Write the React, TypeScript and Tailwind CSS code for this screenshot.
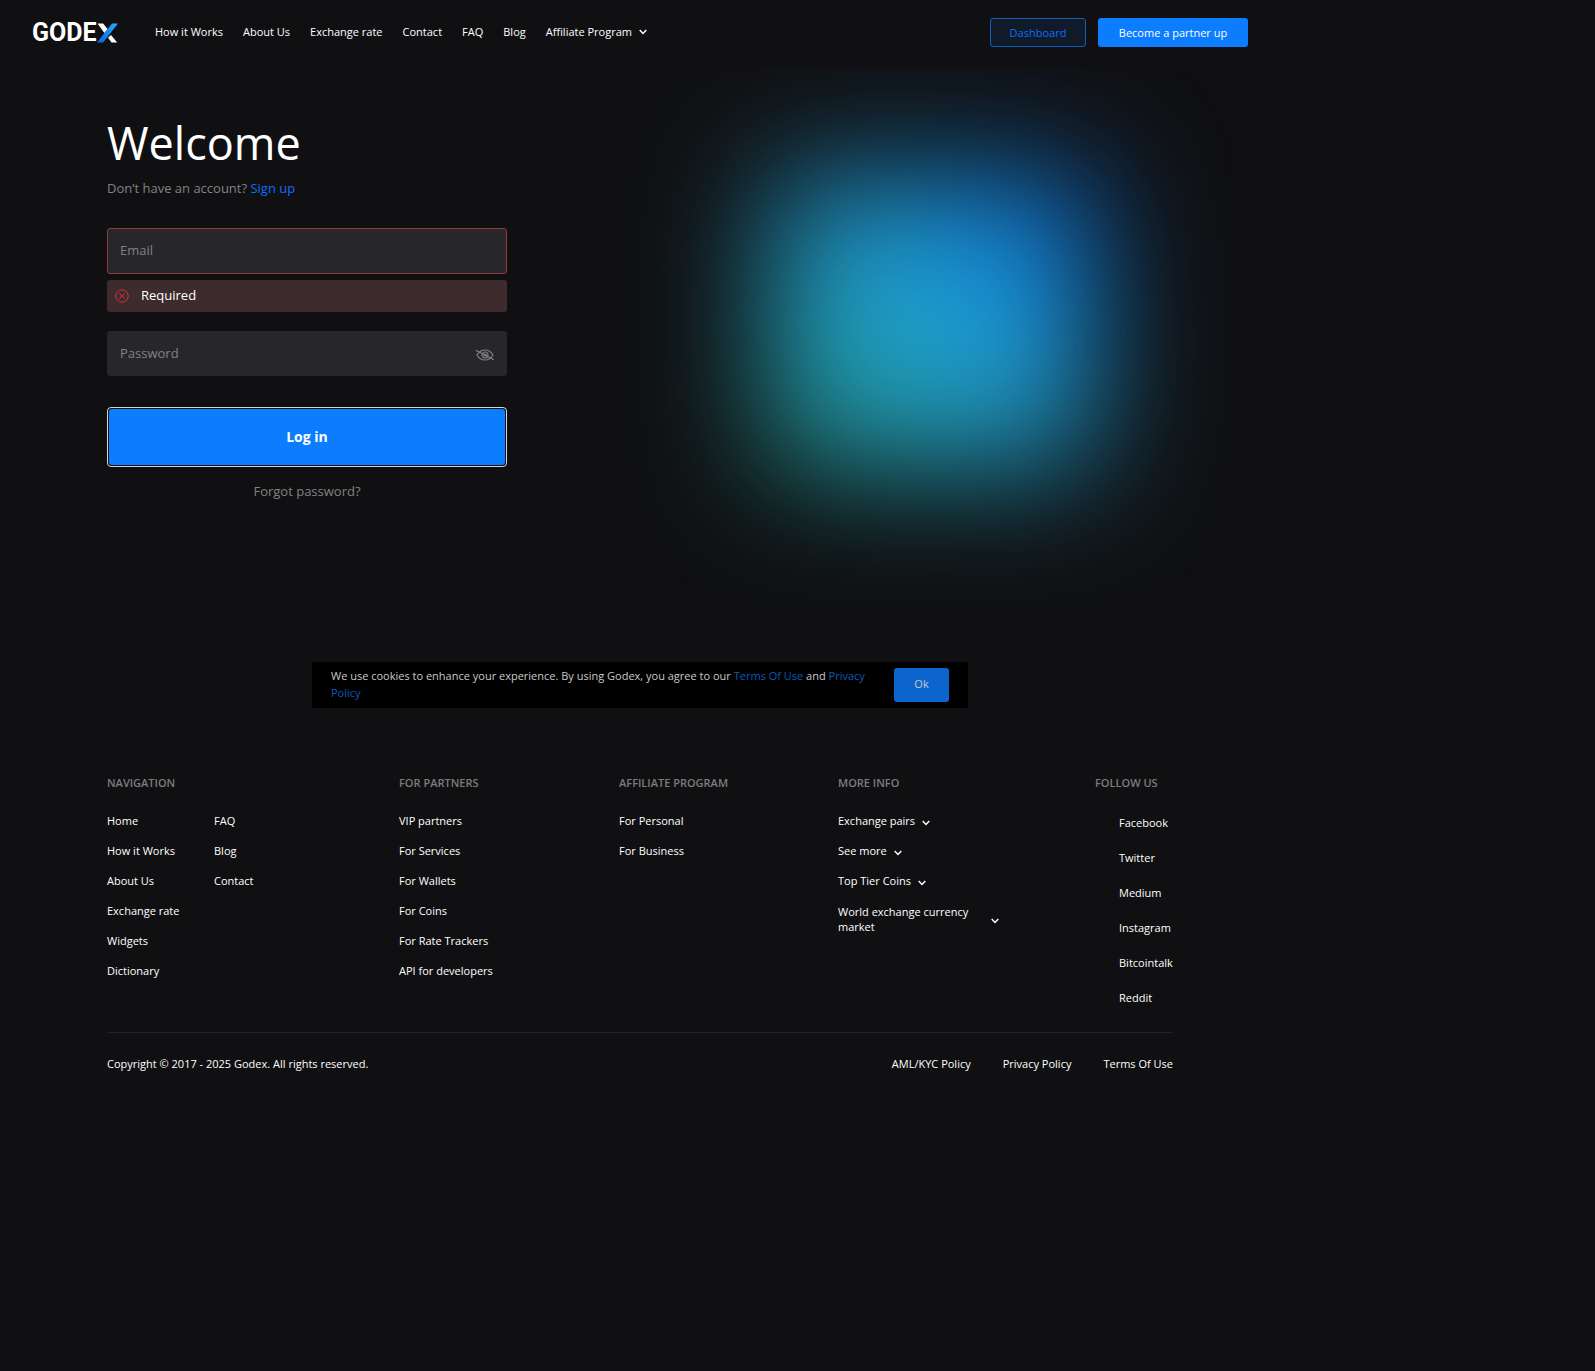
import React from "react";

const navLinks = ["How it Works", "About Us", "Exchange rate", "Contact", "FAQ", "Blog"];

function Chevron({ className = "" }: { className?: string }) {
  return (
    <svg viewBox="0 0 8 6" className={"h-[6px] w-2 shrink-0 " + className} fill="none" stroke="currentColor" strokeWidth="1.5" aria-hidden="true">
      <path d="M0.7 1l3.3 3.4L7.3 1" />
    </svg>
  );
}

function Logo() {
  return (
    <span className="flex items-center">
      <span className="w-[65px] font-['Roboto',sans-serif] text-[25px] leading-5 font-bold">GODE</span>
      <svg viewBox="65 0 21 20" className="h-5 w-[21px]" aria-hidden="true">
        <defs>
          <linearGradient id="slash" x1="0" y1="1" x2="1" y2="0">
            <stop offset="0" stopColor="#0d5fee" />
            <stop offset="1" stopColor="#1fb0f5" />
          </linearGradient>
        </defs>
        <path d="M65.5 .5h5.600L75.600 6l-3.200 4z" fill="#fff" />
        <path d="M79 12l6.200 7.400h-5.600L76 14.800z" fill="#fff" />
        <path d="M80 .4H86L71.200 19.400H65z" fill="url(#slash)" />
      </svg>
    </span>
  );
}

function EyeOff() {
  return (
    <svg viewBox="0 0 20 12" className="h-3 w-5" fill="none" stroke="currentColor" strokeWidth="1.200" aria-hidden="true">
      <path d="M2 6c2-3.400 5-5 8-5s6 1.600 8 5c-2 3.400-5 5-8 5S4 9.400 2 6z" />
      <circle cx="10" cy="6" r="3" />
      <circle cx="10" cy="6" r="1" />
      <path d="M.8 1.200L19 10.800" />
    </svg>
  );
}

function LinkList({ items }: { items: string[] }) {
  return (
    <ul className="flex flex-col gap-[14px]">
      {items.map((t) => (
        <li key={t} className="flex h-4 items-center">
          <a href="#">{t}</a>
        </li>
      ))}
    </ul>
  );
}

function Heading({ children }: { children: React.ReactNode }) {
  return <h2 className="mb-[22px] text-[11px] leading-4 font-semibold whitespace-nowrap text-[#7c7c7c]">{children}</h2>;
}

export default function App() {
  return (
    <div className="min-h-screen bg-[#101012] font-['Open_Sans',sans-serif] text-[11px] leading-4 text-white">
      <div className="max-w-[1280px]">
        <header className="relative z-10 flex h-[68px] items-center bg-[#101012] px-8 pb-[3px]">
          <a href="#" aria-label="Godex" className="mr-[37px]">
            <Logo />
          </a>
          <nav className="flex flex-1 items-center gap-5 pb-[2px]">
            {navLinks.map((t) => (
              <a key={t} href="#">{t}</a>
            ))}
            <button type="button" className="flex items-center gap-[7px]">
              Affiliate Program <Chevron />
            </button>
          </nav>
          <div className="flex gap-3">
            <a href="#" className="flex h-[29px] w-24 items-center justify-center rounded-[3px] border border-[#0f5fbb] bg-[#101a28] text-[#0d6efd]">Dashboard</a>
            <a href="#" className="flex h-[29px] w-[150px] items-center justify-center rounded-[3px] bg-[#0d7dff]">Become a partner up</a>
          </div>
        </header>

        <main className="relative h-[594px] px-[107px] pt-[51px]">
          <div className="pointer-events-none absolute inset-0 overflow-hidden">
            <div className="absolute top-[110px] left-[770px] h-[290px] w-[322px] bg-linear-to-tr from-[#259f8c] via-[#209bd0] via-55% to-[#0f6df0] blur-[64px]" />
          </div>
          <form className="relative w-[400px]" onSubmit={(e) => e.preventDefault()}>
            <h1 className="text-[45px] leading-[48px]">Welcome</h1>
            <p className="mt-[11px] text-[13px] leading-5 text-[#828282]">
              Don’t have an account? <a href="#" className="text-[#0d6efd]">Sign up</a>
            </p>
            <input type="email" aria-label="Email" placeholder="Email" className="mt-[30px] block h-[46px] w-full rounded-[3px] border border-[#93383d] bg-[#27272b] px-3 pb-[2px] text-[13px] outline-none placeholder:text-[#828282]" />
            <div role="alert" className="mt-[6px] flex h-8 items-center gap-3 rounded-[3px] bg-[#3d2b2e] px-2 text-[13px]">
              <svg viewBox="0 0 14 14" className="size-[14px]" fill="none" stroke="#dc3038" aria-hidden="true">
                <circle cx="7" cy="7" r="6.200" />
                <path d="M4.200 4.200l5.600 5.600M9.800 4.200l-5.600 5.600" />
              </svg>
              <span className="pb-[2px]">Required</span>
            </div>
            <div className="relative mt-[19px]">
              <input type="password" aria-label="Password" placeholder="Password" className="block h-[45px] w-full rounded-[3px] bg-[#27272b] pr-12 pb-[2px] pl-[13px] text-[13px] outline-none placeholder:text-[#828282]" />
              <button type="button" aria-label="Show password" className="absolute top-[18px] right-3 text-[#828282]">
                <EyeOff />
              </button>
            </div>
            <div className="mt-[31px] rounded-[4px] border border-[#d6d6d6] p-px">
              <button type="submit" className="block h-14 w-full rounded-[3px] bg-[#0d7dff] text-[14px] font-bold">Log in</button>
            </div>
            <div className="mt-[14px] text-center text-[13px] leading-5 text-[#828282]">
              <a href="#">Forgot password?</a>
            </div>
          </form>
        </main>

        <aside className="mx-auto flex h-[46px] w-[656px] items-center justify-between bg-black px-[19px] text-[#c9c9c9]">
          <p className="w-[545px] pb-[2px] leading-[17px] font-medium">
            We use cookies to enhance your experience. By using Godex, you agree to our{" "}
            <a href="#" className="font-normal text-[#0d59b5]">Terms Of Use</a> and{" "}
            <a href="#" className="font-normal text-[#0d59b5]">Privacy Policy</a>
          </p>
          <button type="button" className="h-[34px] w-[55px] rounded-[3px] bg-[#0c65cf] pb-[2px] font-medium">Ok</button>
        </aside>

        <footer className="mx-[107px] pt-[67px]">
          <div className="flex justify-between border-b border-[#232325] pb-[26px]">
            <section className="w-[292px]">
              <Heading>NAVIGATION</Heading>
              <div className="flex">
                <div className="w-[107px]">
                  <LinkList items={["Home", "How it Works", "About Us", "Exchange rate", "Widgets", "Dictionary"]} />
                </div>
                <LinkList items={["FAQ", "Blog", "Contact"]} />
              </div>
            </section>
            <section className="w-[220px]">
              <Heading>FOR PARTNERS</Heading>
              <LinkList items={["VIP partners", "For Services", "For Wallets", "For Coins", "For Rate Trackers", "API for developers"]} />
            </section>
            <section className="w-[219px]">
              <Heading>AFFILIATE PROGRAM</Heading>
              <LinkList items={["For Personal", "For Business"]} />
            </section>
            <section className="w-[257px]">
              <Heading>MORE INFO</Heading>
              <div className="flex flex-col items-start gap-[14px]">
                {["Exchange pairs", "See more", "Top Tier Coins"].map((t) => (
                  <button key={t} type="button" className="flex h-4 items-center gap-[7px]">
                    {t} <Chevron className="mt-1" />
                  </button>
                ))}
                <button type="button" className="flex items-center pt-px text-left leading-[15px]">
                  <span className="w-[153px]">World exchange currency market</span>
                  <Chevron className="mt-1" />
                </button>
              </div>
            </section>
            <section className="w-[78px]">
              <Heading>FOLLOW US</Heading>
              <ul className="flex flex-col gap-[19px] pt-0.5 pl-6">
                {["Facebook", "Twitter", "Medium", "Instagram", "Bitcointalk", "Reddit"].map((t) => (
                  <li key={t} className="h-4">
                    <a href="#">{t}</a>
                  </li>
                ))}
              </ul>
            </section>
          </div>
          <div className="flex items-center justify-between pt-[23px]">
            <p>Copyright © 2017 - 2025 Godex. All rights reserved.</p>
            <div className="flex gap-8">
              <a href="#">AML/KYC Policy</a>
              <a href="#">Privacy Policy</a>
              <a href="#">Terms Of Use</a>
            </div>
          </div>
        </footer>
      </div>
    </div>
  );
}
